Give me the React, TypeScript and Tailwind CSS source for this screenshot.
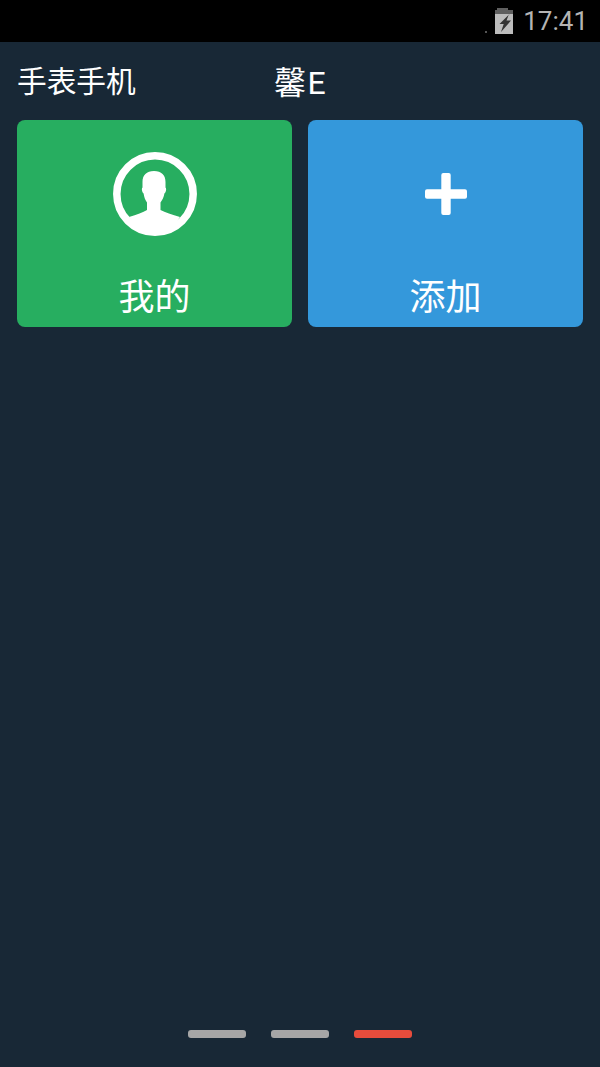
const cjk = "font-['Roboto','Noto_Sans_CJK_SC',sans-serif]";

function BatteryIcon() {
  return (
    <svg width="18" height="26" viewBox="0 0 18 26" className="block">
      <path d="M2 0h11v2h5v24H0V2h2z" fill="#5f5f5f" />
      <path d="M0 6h18v20H0z" fill="#bcbcbc" />
      <path d="M14.500 6 4.500 16h4.200L6 24 16 12.500h-4.500L14 6z" fill="#333" />
    </svg>
  );
}

function PersonIcon() {
  return (
    <svg width="84" height="84" viewBox="0 0 84 84" className="block">
      <circle cx="42" cy="42" r="38.200" fill="none" stroke="#fff" strokeWidth="7.500" />
      <path
        d="M41 19C33.500 19 29.500 23 29.500 30V35.500C28.900 36 28.700 37 29 38.500C29.300 40 30 41 30.600 41.500C31.100 45 32.200 48 34 50.500V58C30 60.500 24 62.500 16 65A30 30 0 0 0 67 65C59 62.500 52 60.500 47.500 58V50.500C49.300 48 50.900 45 51.400 41.500C52 41 52.700 40 53 38.500C53.300 37 53.100 36 52.500 35.500V30C52.500 23 48.500 19 41 19Z"
        fill="#fff"
      />
    </svg>
  );
}

function PlusIcon() {
  return (
    <svg width="42" height="42" viewBox="0 0 42 42" className="block">
      <rect x="16.300" y="0" width="9.400" height="42" rx="2" fill="#fff" />
      <rect x="0" y="16.200" width="42" height="9.600" rx="2" fill="#fff" />
    </svg>
  );
}

function Tile({ color, label, children }: { color: string; label: string; children: React.ReactNode }) {
  return (
    <div className={`${color} h-[207px] rounded-lg flex flex-col items-center`}>
      <div className="h-[147px] flex items-center justify-center">{children}</div>
      <div className="text-white text-[36px] leading-[54px] mt-[4px]">{label}</div>
    </div>
  );
}

export default function App() {
  return (
    <div className={`${cjk} h-[1067px] w-[600px] bg-[#182836] flex flex-col overflow-hidden`}>
      <div className="h-[42px] bg-black flex items-center justify-end pr-[12px]">
        <div className="w-[2px] h-[2px] bg-[#555] self-end mb-[9px] mr-[8px]" />
        <BatteryIcon />
        <span className="text-[#b4b4b4] text-[26px] leading-none ml-[10px]">17:41</span>
      </div>

      <div className="flex h-[78px] items-center pl-[17px] pt-[3px] text-white text-[29.700px]">
        <span className="w-[257px]">手表手机</span>
        <span className="text-[32px] tracking-[1.500px]">馨E</span>
      </div>

      <div className="grid grid-cols-2 gap-[16px] px-[17px]">
        <Tile color="bg-[#27ae60]" label="我的">
          <PersonIcon />
        </Tile>
        <Tile color="bg-[#3498db]" label="添加">
          <PlusIcon />
        </Tile>
      </div>

      <div className="mt-auto mb-[29px] flex justify-center gap-[25px]">
        <div className="w-[58px] h-[8px] rounded-[3px] bg-[#a6a6a6]" />
        <div className="w-[58px] h-[8px] rounded-[3px] bg-[#a6a6a6]" />
        <div className="w-[58px] h-[8px] rounded-[3px] bg-[#e74c3c]" />
      </div>
    </div>
  );
}
